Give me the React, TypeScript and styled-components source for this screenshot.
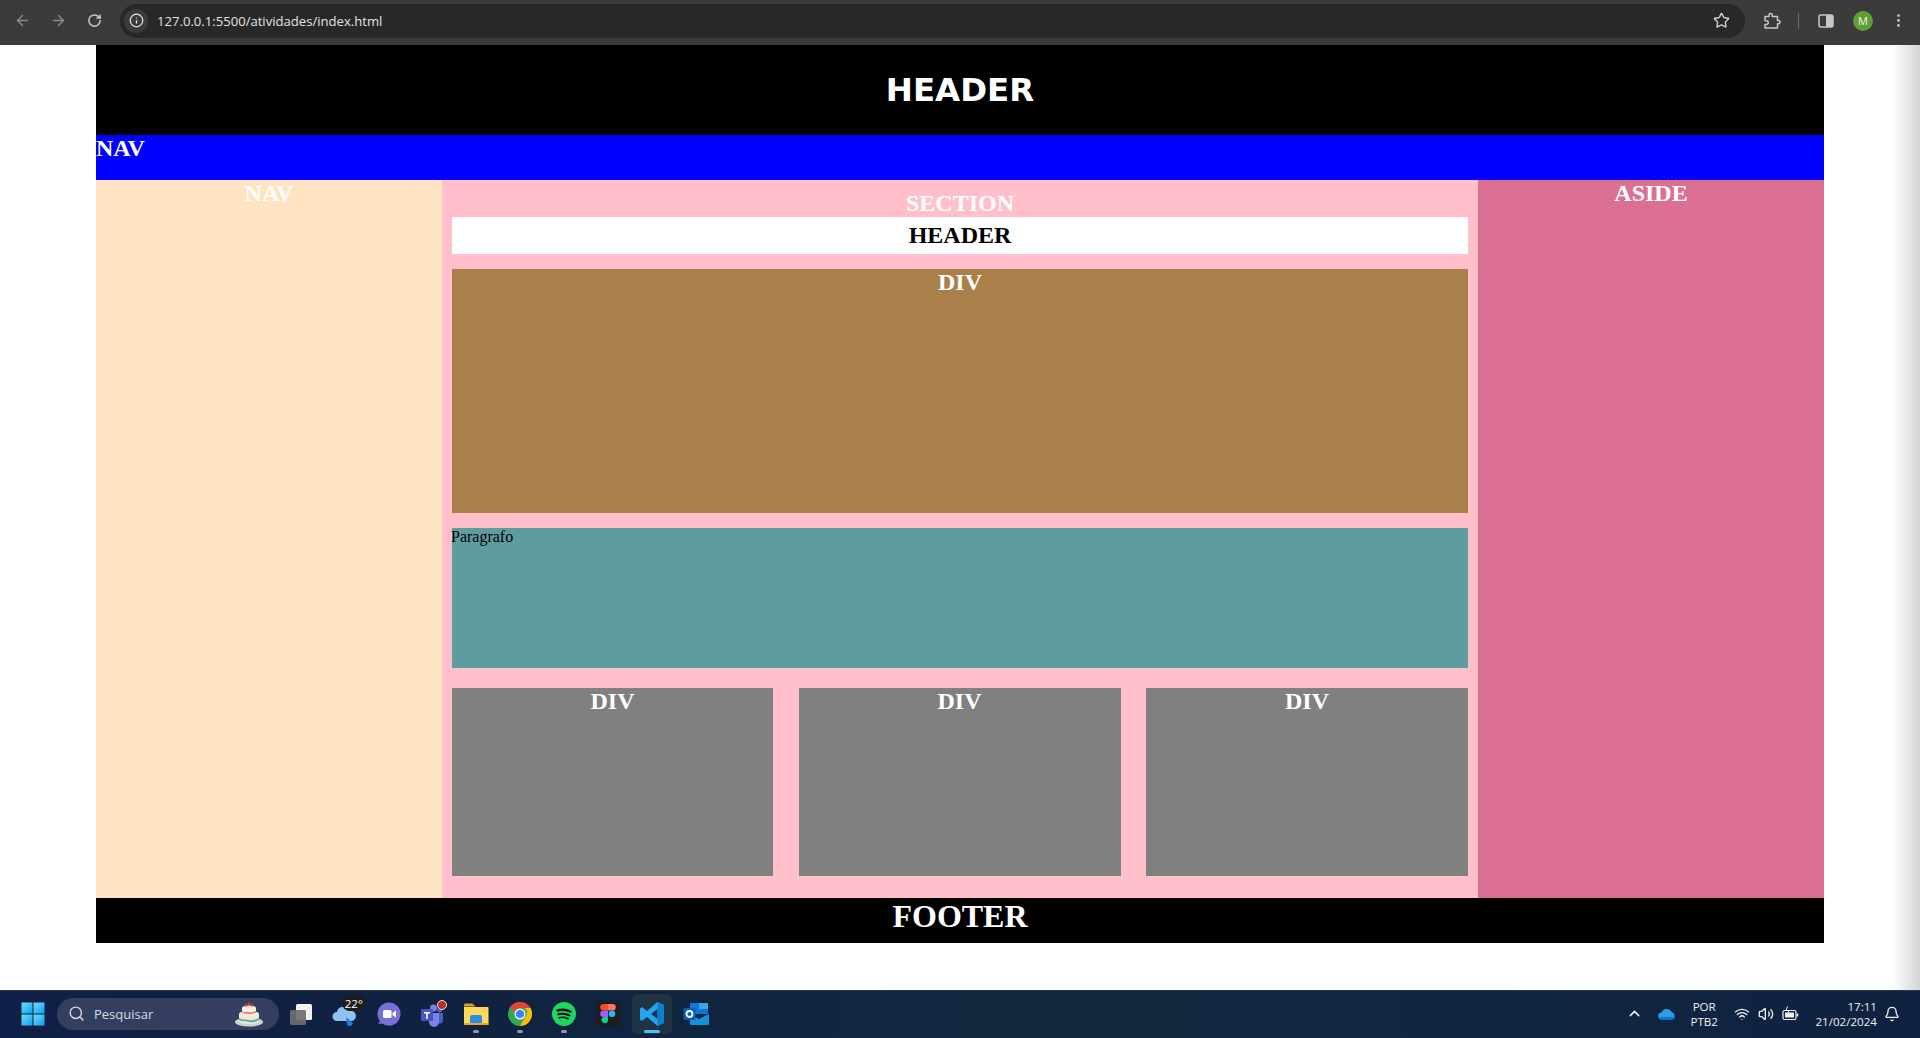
import React from 'react';
import styled, { createGlobalStyle } from 'styled-components';
import { ArrowLeft, ArrowRight, RotateCw, Info, Star, MoreVertical, Search, ChevronUp, Bell, Volume2, Wifi } from 'lucide-react';

const GlobalStyle = createGlobalStyle`
  html, body {
    margin: 0;
    padding: 0;
    background: #fff;
    overflow: hidden;
  }
  * { box-sizing: border-box; }
`;

const Screen = styled.div`
  position: relative;
  display: flex;
  flex-direction: column;
  width: 1920px;
  height: 1038px;
  overflow: hidden;
`;

const Toolbar = styled.div`
  display: flex;
  align-items: center;
  height: 45px;
  padding: 0 0 4px 4px;
  background: #3b3b3b;
  color: #c7c7c7;
  flex: none;
  font-family: "Open Sans", "Liberation Sans", sans-serif;
`;

const ToolButton = styled.div<{ $dim?: boolean; $w?: number; $ml?: number }>`
  display: flex;
  align-items: center;
  justify-content: center;
  flex: none;
  width: ${({ $w }) => $w || 36}px;
  margin-left: ${({ $ml }) => $ml || 0}px;
  color: ${({ $dim }) => ($dim ? '#8a8a8a' : '#c7c7c7')};
`;

const Omnibox = styled.div`
  display: flex;
  align-items: center;
  flex: none;
  width: 1625px;
  height: 34px;
  margin-left: 8px;
  padding: 0 15px 0 4px;
  background: #282828;
  border-radius: 17px;
`;

const InfoChip = styled.div`
  display: flex;
  align-items: center;
  justify-content: center;
  width: 24px;
  height: 24px;
  margin-right: 9px;
  border-radius: 50%;
  background: #3b3b3b;
  color: #e3e3e3;
`;

const Url = styled.span`
  flex: 1;
  font-size: 13.1px;
  color: #e3e3e3;
`;

const Divider = styled.div`
  flex: none;
  width: 1px;
  height: 16px;
  margin: 0 19px 0 6px;
  background: #6a6a6a;
`;

const Avatar = styled.div`
  display: flex;
  align-items: center;
  justify-content: center;
  flex: none;
  width: 20px;
  height: 20px;
  margin: 0 17px 0 19px;
  border-radius: 50%;
  background: #5f9e35;
  color: #f2f2f2;
  font-size: 11px;
`;

const Page = styled.div`
  display: flex;
  flex-direction: column;
  flex: none;
  width: 90%;
  height: 898px;
  margin: 0 auto;
  color: #fff;
  font-family: "Liberation Serif", "Times New Roman", serif;
`;

const TopHeader = styled.header`
  display: flex;
  align-items: center;
  justify-content: center;
  flex: none;
  height: 90px;
  background: #000;
  font-family: "DejaVu Sans", sans-serif;
  font-size: 32.4px;
  font-weight: 700;
`;

const TopNav = styled.nav`
  flex: none;
  height: 45px;
  background: #00f;
`;

const Title = styled.h2<{ $big?: boolean; $dark?: boolean }>`
  margin: 0;
  font-size: ${({ $big }) => ($big ? 32 : 24)}px;
  font-weight: 700;
  line-height: ${({ $big }) => ($big ? 37 : 27)}px;
  text-align: ${({ $big }) => ($big ? 'center' : 'inherit')};
  color: ${({ $dark }) => ($dark ? '#000' : '#fff')};
`;

const Middle = styled.div`
  display: grid;
  grid-template-columns: 346px 1036px 346px;
  flex: none;
  height: 718px;
`;

const Side = styled.aside<{ $bg: string }>`
  text-align: center;
  background: ${({ $bg }) => $bg};
`;

const MainSection = styled.section`
  padding: 10px 10px 0;
  background: #ffc0cb;
  text-align: center;
`;

const SectionTitle = styled(Title)`
  height: 27px;
`;

const InnerHeader = styled.header`
  height: 37px;
  padding-top: 5px;
  background: #fff;
`;

const BrownBox = styled.div`
  height: 244px;
  margin-top: 15px;
  background: #a9804a;
`;

const Paragraph = styled.p`
  height: 140px;
  margin: 15px 0 0;
  background: #5f9ca0;
  color: #000;
  font-size: 16px;
  line-height: 18px;
  text-align: left;
  text-indent: -1px;
`;

const Columns = styled.div`
  display: grid;
  grid-template-columns: 321px 322px 322px;
  justify-content: space-between;
  margin-top: 20px;
`;

const GreyBox = styled.div`
  height: 188px;
  background: #808080;
`;

const Footer = styled.footer`
  flex: none;
  height: 45px;
  background: #000;
  text-align: center;
`;

const Taskbar = styled.div`
  display: flex;
  align-items: center;
  flex: none;
  height: 48px;
  margin-top: 47px;
  padding: 0 0 2px 21px;
  background: linear-gradient(90deg, #101f47 0%, #10233f 30%, #0f2a3f 55%, #0f2240 100%);
  border-top: 1px solid #2a3450;
  color: #f0f0f0;
  font-family: "Open Sans", "Liberation Sans", sans-serif;
`;

const SearchBox = styled.div`
  display: flex;
  align-items: center;
  flex: none;
  width: 222px;
  height: 32px;
  margin-left: 12px;
  padding: 0 15px 0 11px;
  border-radius: 16px;
  background: #343f60;
  color: #d8dbe2;
  font-size: 13px;
`;

const SearchText = styled.span`
  flex: 1;
  margin-left: 9px;
`;

const TaskIcon = styled.div<{ $active?: boolean; $open?: boolean }>`
  position: relative;
  display: flex;
  align-items: center;
  justify-content: center;
  flex: none;
  width: 40px;
  height: 40px;
  margin-right: 3.85px;
  border-radius: 5px;
  background: ${({ $active }) => ($active ? '#1f3344' : 'transparent')};

  &::after {
    content: '';
    display: ${({ $active, $open }) => ($active || $open ? 'block' : 'none')};
    position: absolute;
    bottom: 1px;
    left: 50%;
    width: ${({ $active }) => ($active ? 16 : 6)}px;
    height: 3px;
    margin-left: ${({ $active }) => ($active ? -8 : -3)}px;
    border-radius: 2px;
    background: ${({ $active }) => ($active ? '#4cc2ff' : '#8f98a3')};
  }
`;

const TaskIcons = styled.div`
  display: flex;
  align-items: center;
  margin-left: 2px;
`;

const Temperature = styled.span`
  position: absolute;
  top: 2px;
  right: -1px;
  padding: 0 3px;
  border-radius: 8px;
  background: #1c1c1c;
  color: #fff;
  font-size: 11.5px;
  line-height: 15px;
`;

const Tray = styled.div`
  display: flex;
  align-items: center;
  margin-left: auto;
  padding-right: 20px;
  font-size: 11.6px;
`;

const TrayItem = styled.div<{ $gap?: number }>`
  display: flex;
  align-items: center;
  margin-right: ${({ $gap }) => $gap ?? 8}px;
`;

const TwoLines = styled.div<{ $right?: boolean; $gap?: number }>`
  display: flex;
  flex-direction: column;
  align-items: ${({ $right }) => ($right ? 'flex-end' : 'center')};
  margin-right: ${({ $gap }) => $gap ?? 16}px;
  line-height: 15px;
`;

const ScreenEdge = styled.div`
  position: absolute;
  top: 45px;
  right: 0;
  width: 28px;
  height: 945px;
  background: linear-gradient(90deg, rgba(205, 205, 205, 0), rgba(205, 205, 205, 0.85));
`;

const ExtensionIcon = () => (
  <svg width="18" height="18" viewBox="0 0 18 18" fill="none" stroke="#c7c7c7" strokeWidth="1.5">
    <path d="M2 4.5h4V3a1.6 1.6 0 0 1 3.2 0v1.5h5.3v4h1a1.6 1.6 0 0 1 0 3.2h-1V16H2v-3.6h1.5a1.8 1.8 0 0 0 0-3.6H2z" strokeLinejoin="round" />
  </svg>
);

const SidePanelIcon = () => (
  <svg width="16" height="16" viewBox="0 0 16 16">
    <rect x="1" y="2" width="14" height="12" rx="2" fill="none" stroke="#c7c7c7" strokeWidth="1.5" />
    <rect x="8" y="2" width="7" height="12" rx="1" fill="#c7c7c7" />
  </svg>
);

const WindowsLogo = () => (
  <svg width="24" height="24" viewBox="0 0 24 24">
    <defs>
      <linearGradient id="winBlue" x1="0" y1="0" x2="1" y2="1">
        <stop offset="0" stopColor="#6ce0fa" />
        <stop offset="1" stopColor="#0f9dee" />
      </linearGradient>
    </defs>
    <rect x="0.5" y="0.5" width="11" height="11" fill="url(#winBlue)" />
    <rect x="12.5" y="0.5" width="11" height="11" fill="url(#winBlue)" />
    <rect x="0.5" y="12.5" width="11" height="11" fill="url(#winBlue)" />
    <rect x="12.5" y="12.5" width="11" height="11" fill="url(#winBlue)" />
  </svg>
);

const CakeIcon = () => (
  <svg width="30" height="26" viewBox="0 0 30 26">
    <ellipse cx="15" cy="21" rx="14" ry="4.5" fill="#c9d2d2" />
    <path d="M5 13c0-2 4-3 10-3s10 1 10 3v7c0 2-4 3-10 3s-10-1-10-3z" fill="#f4e6d8" />
    <path d="M5 17c3 2 6 1 10 2s7-1 10-2v2c-3 2-7 3-10 2s-7 0-10-2z" fill="#4fb5ad" />
    <path d="M8 7c0-1.500 3-2.500 7-2.500S22 5.500 22 7v6c-2 2-12 2-14 0z" fill="#fbeee4" />
    <path d="M8 10c2 1.500 4 .5 7 1s5-.5 7-1v1.500c-3 2-11 2-14 0z" fill="#e98b7e" />
    <circle cx="12" cy="4" r="1.500" fill="#c8362f" />
    <circle cx="18" cy="4" r="1.500" fill="#c8362f" />
    <circle cx="15" cy="2.500" r="1.500" fill="#c8362f" />
  </svg>
);

const TaskViewIcon = () => (
  <svg width="24" height="24" viewBox="0 0 24 24">
    <rect x="7" y="2" width="16" height="16" rx="1.500" fill="#f2f2f2" />
    <rect x="1" y="8" width="16" height="15" rx="1.500" fill="#6e6e6e" fillOpacity="0.92" />
  </svg>
);

const WeatherIcon = () => (
  <svg width="26" height="26" viewBox="0 0 26 26">
    <path d="M5 20a4.500 4.500 0 0 1 0-9 6.500 6.500 0 0 1 12.500-1A5 5 0 0 1 20 20z" fill="#8fc2f2" />
    <path d="M14 16l7 6a3.500 3.500 0 0 1-6 2z" fill="#1f7be0" />
  </svg>
);

const MeetIcon = () => (
  <svg width="24" height="24" viewBox="0 0 24 24">
    <circle cx="12" cy="12" r="11.500" fill="#7a6fd6" />
    <path d="M1 22l4-6 5 5z" fill="#7a6fd6" />
    <rect x="6" y="8" width="8.500" height="8" rx="1.500" fill="#fff" />
    <path d="M15.500 11l3.500-2.500v7L15.500 13z" fill="#fff" />
  </svg>
);

const TeamsIcon = () => (
  <svg width="28" height="28" viewBox="0 0 28 28">
    <circle cx="14.500" cy="8" r="3.500" fill="#7b83eb" />
    <circle cx="20.500" cy="10" r="2.500" fill="#5059c9" />
    <path d="M17 13h7v7a3.500 3.500 0 0 1-7 0z" fill="#5059c9" />
    <path d="M9 13h11v9a5 5 0 0 1-10 0z" fill="#7b83eb" />
    <rect x="2" y="9" width="12" height="12" rx="1" fill="#4b53bc" />
    <path d="M5 12h6v1.500H8.800V19H7.200v-5.500H5z" fill="#fff" />
    <circle cx="23" cy="5" r="4.500" fill="#c42b1c" stroke="#e8e8e8" strokeWidth="1" />
  </svg>
);

const FolderIcon = () => (
  <svg width="26" height="24" viewBox="0 0 26 24">
    <path d="M1 3a1.500 1.500 0 0 1 1.500-1.500h7l3 3H1z" fill="#d9a21b" />
    <path d="M1 5h23.500a1 1 0 0 1 1 1v16a1 1 0 0 1-1 1H2a1 1 0 0 1-1-1z" fill="#fdd75e" />
    <path d="M7 15a2 2 0 0 1 2-2h8a2 2 0 0 1 2 2v8H7z" fill="#2b8ee0" />
    <rect x="1" y="21" width="24.500" height="2" fill="#e6ac1f" />
  </svg>
);

const ChromeIcon = () => (
  <svg width="24" height="24" viewBox="0 0 24 24">
    <circle cx="12" cy="12" r="12" fill="#34a853" />
    <path d="M12 0a12 12 0 0 1 10.400 6H12a6 6 0 0 0-5.600 3.700L2.100 5.300A12 12 0 0 1 12 0z" fill="#ea4335" />
    <path d="M22.400 6A12 12 0 0 1 12 24l5.200-9a6 6 0 0 0-.4-9z" fill="#fbbc05" />
    <circle cx="12" cy="12" r="5.500" fill="#fff" />
    <circle cx="12" cy="12" r="4.300" fill="#4285f4" />
  </svg>
);

const SpotifyIcon = () => (
  <svg width="24" height="24" viewBox="0 0 24 24" fill="none" stroke="#111" strokeLinecap="round">
    <circle cx="12" cy="12" r="12" fill="#1ed760" stroke="none" />
    <path d="M5.500 8.500c4.500-1.200 9-.9 13 1.200" strokeWidth="2.400" />
    <path d="M6.300 12.300c3.800-1 7.700-.7 11 1.100" strokeWidth="2" />
    <path d="M7 15.800c3-.8 6.200-.6 9 .9" strokeWidth="1.600" />
  </svg>
);

const FigmaIcon = () => (
  <svg width="24" height="24" viewBox="0 0 24 24">
    <rect width="24" height="24" rx="1.500" fill="#1e1e1e" />
    <path d="M7.500 2H12v6.500H7.500a3.250 3.250 0 0 1 0-6.500z" fill="#f24e1e" />
    <path d="M12 2h4.500a3.250 3.250 0 0 1 0 6.500H12z" fill="#ff7262" />
    <path d="M7.500 8.500H12V15H7.500a3.250 3.250 0 0 1 0-6.500z" fill="#a259ff" />
    <circle cx="16" cy="11.750" r="3.250" fill="#1abcfe" />
    <path d="M7.500 15H12v3.250a3.250 3.250 0 1 1-4.500-3.250z" fill="#0acf83" />
  </svg>
);

const VsCodeIcon = () => (
  <svg width="26" height="26" viewBox="0 0 26 26">
    <path d="M18.500 1L25 4v18l-6.500 3L8 16l-5 4-2-1.500V7.500L3 6l5 4z" fill="#23a4ec" />
    <path d="M18.500 8L12 13l6.500 5z" fill="#1f3344" />
    <path d="M18.500 1L25 4v18l-6.500 3z" fill="#0f7fcb" />
  </svg>
);

const OutlookIcon = () => (
  <svg width="26" height="24" viewBox="0 0 26 24">
    <rect x="7" y="1" width="18" height="11" fill="#0f78d4" />
    <rect x="16" y="1" width="9" height="6" fill="#35a8ea" />
    <path d="M7 12l9 5 10-5v10a1 1 0 0 1-1 1H8a1 1 0 0 1-1-1z" fill="#1490df" />
    <rect x="0.500" y="6" width="12" height="12" rx="1" fill="#0a5fb0" />
    <circle cx="6.500" cy="12" r="3" fill="none" stroke="#fff" strokeWidth="1.800" />
  </svg>
);

const OneDriveIcon = () => (
  <svg width="18" height="12" viewBox="0 0 18 12">
    <path d="M4 11.500a3.500 3.500 0 0 1-.5-7A5.500 5.500 0 0 1 13.500 4 4 4 0 0 1 14.500 11.500z" fill="#2a9fe8" />
    <path d="M1 9h16a3 3 0 0 1-2.500 2.500H4A3.500 3.500 0 0 1 1 9z" fill="#1374c9" />
  </svg>
);

const BatteryIcon = () => (
  <svg width="17" height="15" viewBox="0 0 17 15" fill="none" stroke="#f0f0f0" strokeWidth="1.200">
    <rect x="1" y="4.500" width="13" height="9" rx="1.500" />
    <rect x="3" y="6.500" width="9" height="5" fill="#f0f0f0" stroke="none" />
    <path d="M15.500 7.500v3" strokeWidth="1.500" />
    <path d="M5.500 0.500l-1.500 4h3l-1.500 3" strokeWidth="1" />
  </svg>
);

const App = () => (
  <Screen>
    <GlobalStyle />
    <Toolbar>
      <ToolButton $dim><ArrowLeft size={17} /></ToolButton>
      <ToolButton $dim><ArrowRight size={17} /></ToolButton>
      <ToolButton><RotateCw size={15} strokeWidth={2.4} /></ToolButton>
      <Omnibox>
        <InfoChip><Info size={15} /></InfoChip>
        <Url>127.0.0.1:5500/atividades/index.html</Url>
        <Star size={17} color="#d0d0d0" />
      </Omnibox>
      <ToolButton $w={40} $ml={7}><ExtensionIcon /></ToolButton>
      <Divider />
      <SidePanelIcon />
      <Avatar>M</Avatar>
      <MoreVertical size={17} />
    </Toolbar>

    <Page>
      <TopHeader>HEADER</TopHeader>
      <TopNav><Title>NAV</Title></TopNav>
      <Middle>
        <Side $bg="#ffe4c4"><Title>NAV</Title></Side>
        <MainSection>
          <SectionTitle>SECTION</SectionTitle>
          <InnerHeader><Title $dark>HEADER</Title></InnerHeader>
          <BrownBox><Title>DIV</Title></BrownBox>
          <Paragraph>Paragrafo</Paragraph>
          <Columns>
            <GreyBox><Title>DIV</Title></GreyBox>
            <GreyBox><Title>DIV</Title></GreyBox>
            <GreyBox><Title>DIV</Title></GreyBox>
          </Columns>
        </MainSection>
        <Side $bg="#db7093"><Title>ASIDE</Title></Side>
      </Middle>
      <Footer><Title $big>FOOTER</Title></Footer>
    </Page>

    <Taskbar>
      <WindowsLogo />
      <SearchBox>
        <Search size={17} />
        <SearchText>Pesquisar</SearchText>
        <CakeIcon />
      </SearchBox>
      <TaskIcons>
        <TaskIcon><TaskViewIcon /></TaskIcon>
        <TaskIcon><WeatherIcon /><Temperature>22°</Temperature></TaskIcon>
        <TaskIcon><MeetIcon /></TaskIcon>
        <TaskIcon><TeamsIcon /></TaskIcon>
        <TaskIcon $open><FolderIcon /></TaskIcon>
        <TaskIcon $open><ChromeIcon /></TaskIcon>
        <TaskIcon $open><SpotifyIcon /></TaskIcon>
        <TaskIcon><FigmaIcon /></TaskIcon>
        <TaskIcon $active><VsCodeIcon /></TaskIcon>
        <TaskIcon><OutlookIcon /></TaskIcon>
      </TaskIcons>
      <Tray>
        <TrayItem $gap={15}><ChevronUp size={17} /></TrayItem>
        <TrayItem $gap={14.5}><OneDriveIcon /></TrayItem>
        <TwoLines $gap={16.5}><span>POR</span><span>PTB2</span></TwoLines>
        <TrayItem $gap={8}><Wifi size={16} /></TrayItem>
        <TrayItem $gap={8}><Volume2 size={16} /></TrayItem>
        <TrayItem $gap={16}><BatteryIcon /></TrayItem>
        <TwoLines $right $gap={7}><span>17:11</span><span>21/02/2024</span></TwoLines>
        <Bell size={16} />
      </Tray>
    </Taskbar>
    <ScreenEdge />
  </Screen>
);

export default App;
